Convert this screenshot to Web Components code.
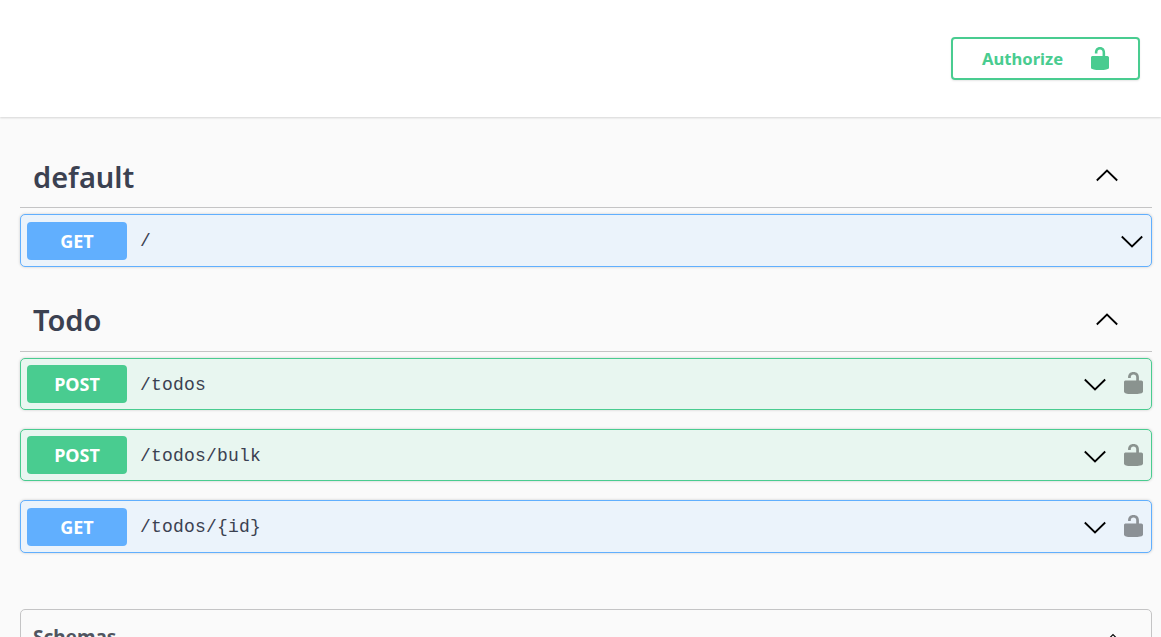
<!DOCTYPE html>
<html>
<head>
<meta charset="utf-8">
<title>Swagger UI</title>
<style>
    html, body { margin: 0; padding: 0; height: 637px; overflow: hidden; background: #fafafa; }
    body { font-family: "Noto Sans", sans-serif; color: #3b4151; }
</style>
</head>
<body>

<api-topbar></api-topbar>
<api-main>
    <api-tag name="default" first>
        <api-op method="get" path="/"></api-op>
    </api-tag>
    <api-tag name="Todo">
        <api-op method="post" path="/todos" locked></api-op>
        <api-op method="post" path="/todos/bulk" locked></api-op>
        <api-op method="get" path="/todos/{id}" locked></api-op>
    </api-tag>
    <api-schemas></api-schemas>
</api-main>

<script>

const LOCK = `<svg viewBox="3 1 14 18" width="100%" height="100%" preserveAspectRatio="none" fill="currentColor">
    <path d="M15.8 8H14V5.6C14 2.703 12.665 1 10 1 7.334 1 6 2.703 6 5.6V6h2v-.801C8 3.754 8.797 3 10 3c1.203 0 2 .754 2 2.199V8H4c-.553 0-1 .646-1 1.199V17c0 .549.428 1.139.951 1.307l1.197.387C5.672 18.861 6.55 19 7.1 19h5.8c.549 0 1.428-.139 1.951-.307l1.196-.387c.524-.167.953-.757.953-1.306V9.199C17 8.646 16.352 8 15.8 8z"/>
</svg>`;

const CHEVRON_DOWN = `<svg viewBox="0 0 22 14" width="22" height="14" fill="none" stroke="#000" stroke-width="1.8">
    <path d="M.8 1.5 11 11.5 21.2 1.5"/>
</svg>`;

const CHEVRON_UP = `<svg viewBox="0 0 22 14" width="22" height="14" fill="none" stroke="#000" stroke-width="1.8">
    <path d="M.8 12.5 11 2.5 21.2 12.5"/>
</svg>`;


class ApiTopbar extends HTMLElement {
    constructor() {
        super();
        this.attachShadow({ mode: 'open' });
        this.shadowRoot.innerHTML = `
        <style>
            :host {
                display: flex;
                justify-content: flex-end;
                align-items: flex-start;
                box-sizing: border-box;
                height: 117px;
                padding: 37px 21px 0 0;
                background: #fff;
                box-shadow: 0 1px 2px rgba(0,0,0,.15);
            }
            .authorize {
                box-sizing: border-box;
                width: 189px;
                height: 43px;
                display: flex;
                align-items: center;
                padding: 0 29px 0 29px;
                justify-content: space-between;
                border: 2px solid #49cc90;
                border-radius: 4px;
                color: #49cc90;
                font: 700 16.6px "Noto Sans", sans-serif;
                box-shadow: 0 1px 2px rgba(0,0,0,.1);
            }
            .icon { display: block; width: 18px; height: 23px; }
            .icon svg { display: block; }
        </style>
        <div class="authorize"><span>Authorize</span><span class="icon">${LOCK}</span></div>
        `;
    }
}
customElements.define('api-topbar', ApiTopbar);


class ApiMain extends HTMLElement {
    constructor() {
        super();
        this.attachShadow({ mode: 'open' });
        this.shadowRoot.innerHTML = `
        <style>
            :host { display: block; padding: 0 9px 0 20px; }
        </style>
        <slot></slot>
        `;
    }
}
customElements.define('api-main', ApiMain);


class ApiTag extends HTMLElement {
    constructor() {
        super();
        this.attachShadow({ mode: 'open' });
        this.shadowRoot.innerHTML = `
        <style>
            :host { display: block; padding-top: 12.4px; }
            :host([first]) { padding-top: 37px; }
            header {
                display: flex;
                align-items: center;
                justify-content: space-between;
                box-sizing: border-box;
                height: 54px;
                padding: 0 34px 8px 13px;
                border-bottom: 1px solid #c4c4c5;
                margin-bottom: 6px;
            }
            h3 {
                margin: 0;
                font: 600 29px/36px "Noto Sans", sans-serif;
                color: #3b4151;
            }
            svg { display: block; }
            .icon { margin-top: -3px; }
        </style>
        <header>
            <h3></h3>
            <span class="icon">${CHEVRON_UP}</span>
        </header>
        <slot></slot>
        `;
    }
    connectedCallback() {
        this.shadowRoot.querySelector('h3').textContent = this.getAttribute('name');
    }
}
customElements.define('api-tag', ApiTag);


class ApiOp extends HTMLElement {
    constructor() {
        super();
        this.attachShadow({ mode: 'open' });
        this.shadowRoot.innerHTML = `
        <style>
            :host {
                display: flex;
                align-items: center;
                box-sizing: border-box;
                height: 52.7px;
                margin-bottom: 18.5px;
                padding: 0 8px 0 6px;
                border: 1px solid var(--c);
                border-radius: 5px;
                background: var(--bg);
                box-shadow: 0 0 3px rgba(0,0,0,.19);
            }
            :host([method=get]) { --c: #61affe; --bg: #ebf3fb; }
            :host([method=post]) { --c: #49cc90; --bg: #e8f6f0; }
            .method {
                flex: none;
                width: 100px;
                height: 38px;
                margin-top: .6px;
                text-align: center;
                border-radius: 4px;
                background: var(--c);
                color: #fff;
                font: 700 18px/38px "Noto Sans", sans-serif;
            }
            .path {
                flex: 1;
                padding-left: 13px;
                margin-top: 2px;
                font: 18px "Liberation Mono", monospace;
                letter-spacing: .2px;
                color: #3b4151;
            }
            .chevron { margin-top: 3px; }
            .chevron svg { display: block; }
            .lock { display: block; width: 19px; height: 22px; margin-left: 18px; margin-top: -1px; color: #000; opacity: .4; }
            .lock svg { display: block; }
            :host(:not([locked])) .lock { display: none; }
        </style>
        <span class="method"></span>
        <span class="path"></span>
        <span class="chevron">${CHEVRON_DOWN}</span>
        <span class="lock">${LOCK}</span>
        `;
    }
    connectedCallback() {
        this.shadowRoot.querySelector('.method').textContent = this.getAttribute('method').toUpperCase();
        this.shadowRoot.querySelector('.path').textContent = this.getAttribute('path');
    }
}
customElements.define('api-op', ApiOp);


class ApiSchemas extends HTMLElement {
    constructor() {
        super();
        this.attachShadow({ mode: 'open' });
        this.shadowRoot.innerHTML = `
        <style>
            :host {
                display: flex;
                justify-content: space-between;
                box-sizing: border-box;
                height: 80px;
                margin-top: 56px;
                padding: 14px 31px 0 12px;
                border: 1px solid #c4c4c5;
                border-radius: 5px;
            }
            h4 { margin: 0; font: 700 19px "Noto Sans", sans-serif; color: #505560; }
            svg { display: block; margin-top: 9px; width: 14px; height: 9px; }
        </style>
        <h4>Schemas</h4>
        <span>${CHEVRON_UP}</span>
        `;
    }
}
customElements.define('api-schemas', ApiSchemas);

</script>
</body>
</html>
